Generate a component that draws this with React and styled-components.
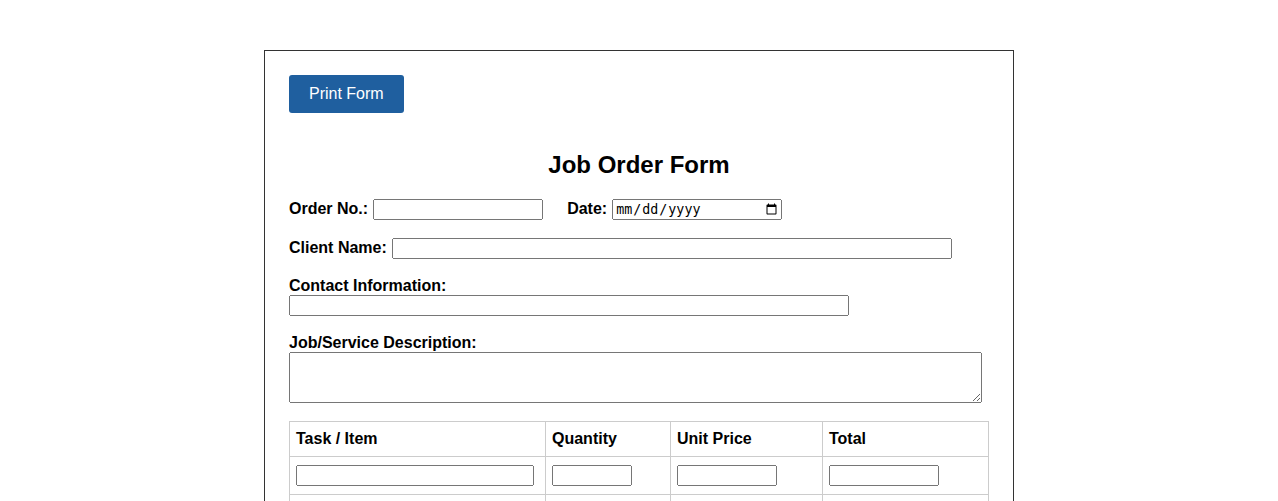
import React from "react";
import styled, { createGlobalStyle } from "styled-components";

const GlobalStyle = createGlobalStyle`
  body {
    margin: 0;
    background: #ffffff;
    font-family: "Liberation Sans", Arial, sans-serif;
    color: #000;
  }
`;

const Container = styled.div`
  width: 700px;
  margin: 50px auto;
  padding: 24px;
  border: 1px solid #333;
  background: #fff;
`;

const ButtonBar = styled.div`
  margin: 0;
`;

const PrintButton = styled.button`
  font-family: "Liberation Sans", Arial, sans-serif;
  font-size: 16px;
  padding: 10px 20px;
  border: none;
  border-radius: 3px;
  background: #1f5f9f;
  color: #fff;
  cursor: pointer;
`;

const Title = styled.h2`
  text-align: center;
  font-size: 24px;
  font-weight: bold;
  margin: 38px 0 20px;
`;

const Group = styled.div`
  margin-bottom: ${(p) => p.$mb || 15}px;
`;

const Label = styled.label`
  font-weight: bold;
  font-size: 16px;
  margin-right: 5px;
  margin-left: ${(p) => p.$ml || 0}px;
`;

const Field = styled.input`
  width: ${(p) => p.$w}px;
  box-sizing: border-box;
`;

const Area = styled.textarea`
  width: 99%;
  height: 51px;
  box-sizing: border-box;
  resize: vertical;
`;

const Table = styled.table`
  width: calc(100% - 1px);
  border-collapse: collapse;
  table-layout: fixed;
`;

const Th = styled.th`
  border: 1px solid #ccc;
  padding: 8px 6px;
  text-align: left;
  font-size: 16px;
`;

const Td = styled.td`
  border: 1px solid #ccc;
  padding: 8px 6px;
`;

const columns = [
  { name: "Task / Item", width: 256, input: 238 },
  { name: "Quantity", width: 125, input: 80 },
  { name: "Unit Price", width: 152, input: 100 },
  { name: "Total", width: 166, input: 110 },
];

export default function App() {
  return (
    <>
      <GlobalStyle />
      <Container>
        <ButtonBar>
          <PrintButton onClick={() => window.print()}>Print Form</PrintButton>
        </ButtonBar>
        <Title>Job Order Form</Title>
        <Group $mb={18}>
          <Label>Order No.:</Label>
          <Field type="text" $w={170} />
          <Label $ml={24}>Date:</Label>
          <Field type="date" $w={170} />
        </Group>
        <Group $mb={18}>
          <Label>Client Name:</Label>
          <Field type="text" $w={560} />
        </Group>
        <Group $mb={18}>
          <Label>Contact Information:</Label>
          <Field type="text" $w={560} />
        </Group>
        <Group $mb={14}>
          <Label>Job/Service Description:</Label>
          <Area />
        </Group>
        <Table>
          <colgroup>
            {columns.map((c) => (
              <col key={c.name} style={{ width: c.width }} />
            ))}
          </colgroup>
          <thead>
            <tr>
              {columns.map((c) => (
                <Th key={c.name}>{c.name}</Th>
              ))}
            </tr>
          </thead>
          <tbody>
            {[0, 1, 2].map((r) => (
              <tr key={r}>
                {columns.map((c) => (
                  <Td key={c.name}>
                    <Field type="text" $w={c.input} />
                  </Td>
                ))}
              </tr>
            ))}
          </tbody>
        </Table>
      </Container>
    </>
  );
}
